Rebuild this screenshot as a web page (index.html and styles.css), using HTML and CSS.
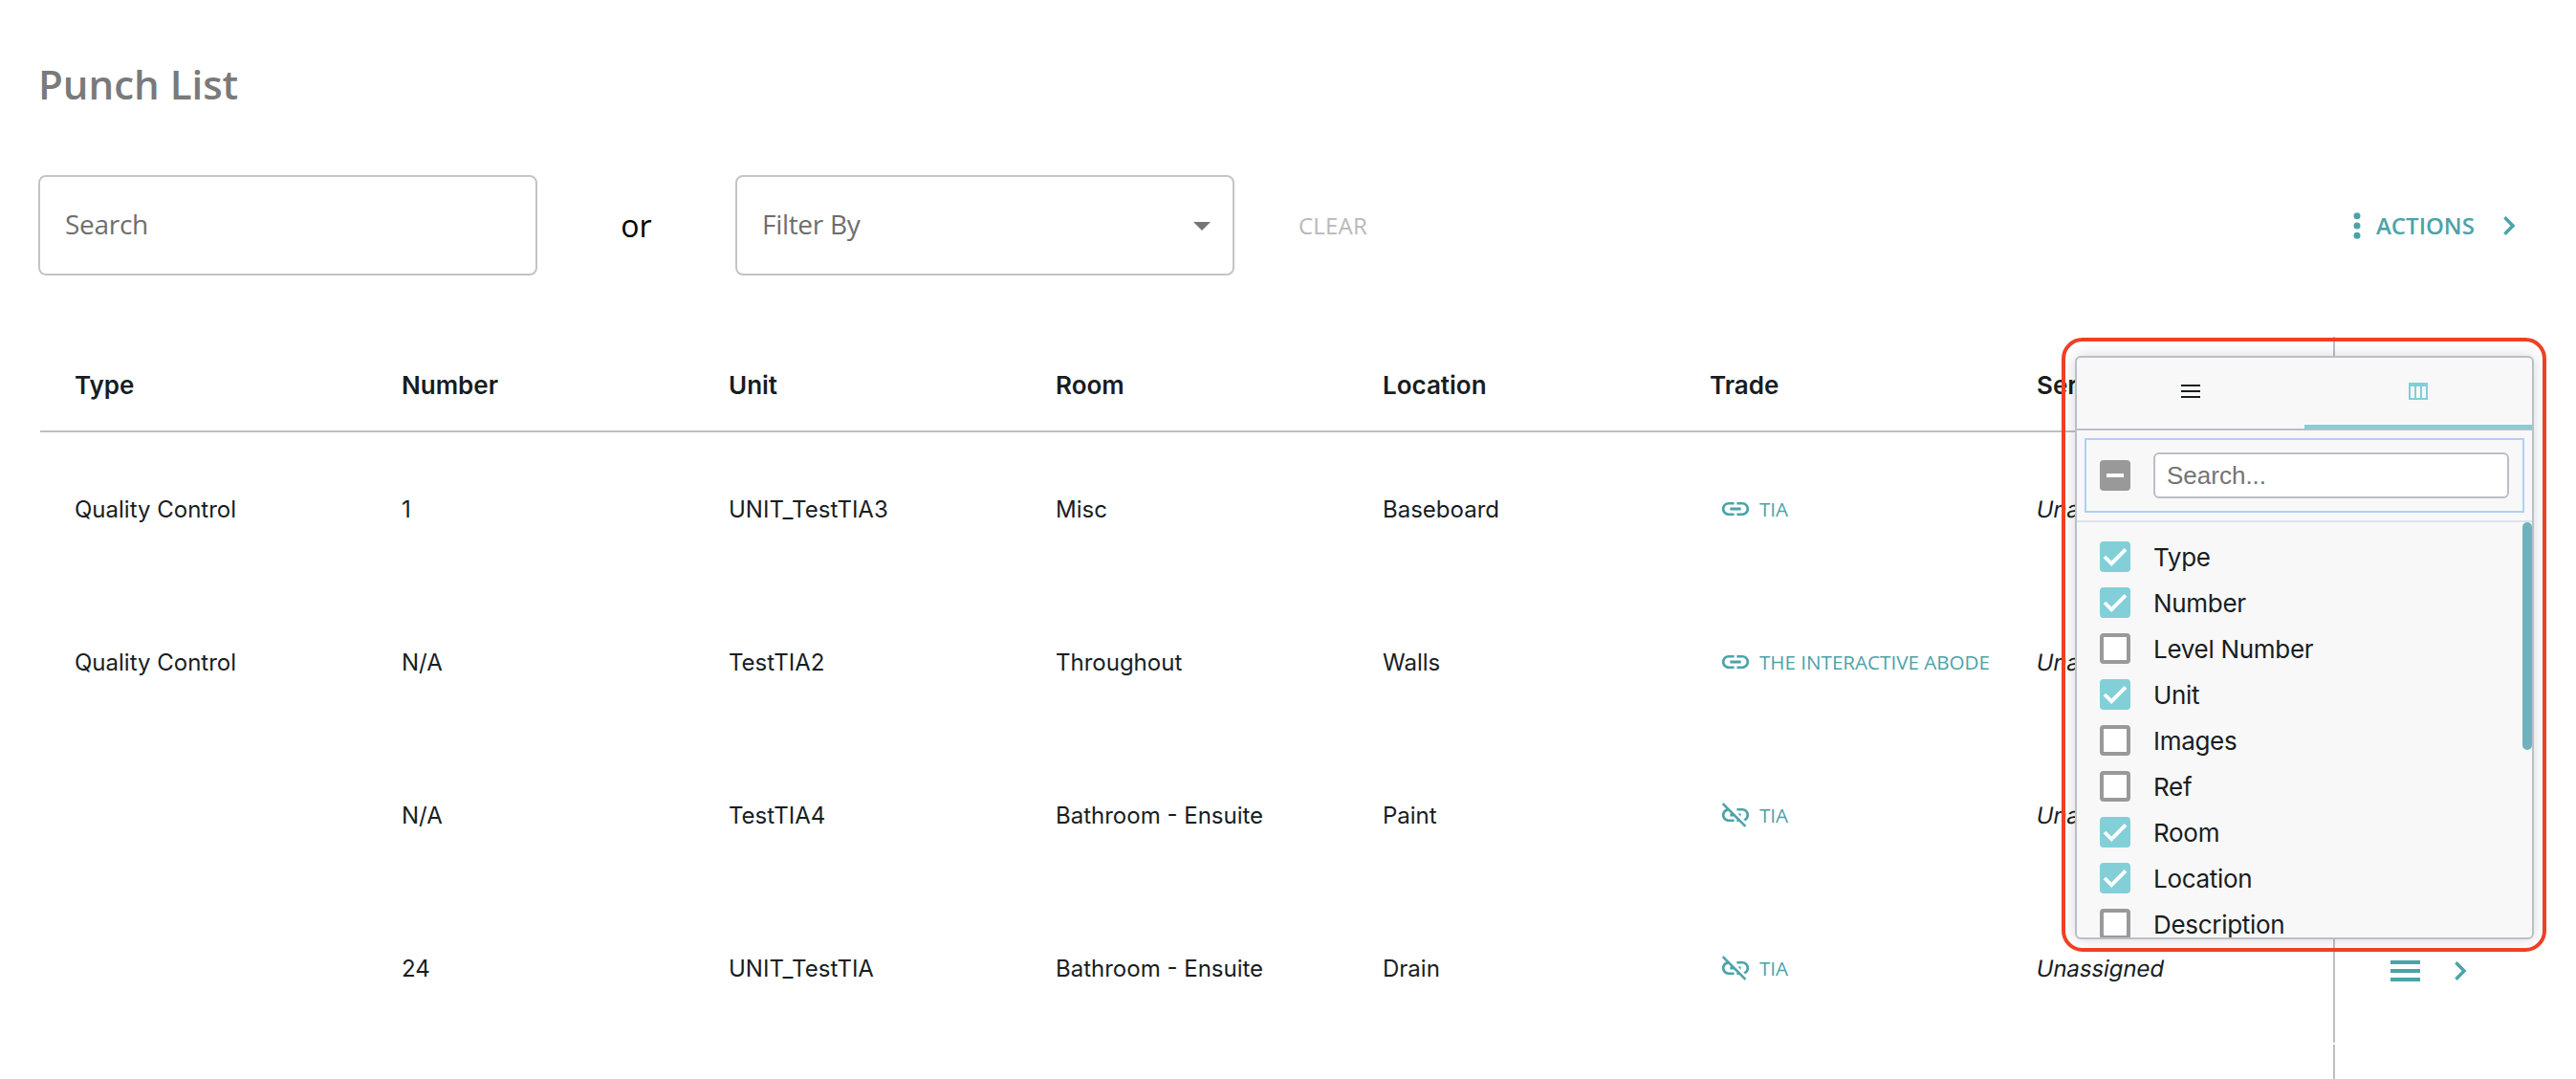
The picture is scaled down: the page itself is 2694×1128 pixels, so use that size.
FILE: index.html
```html
<!DOCTYPE html>
<html lang="en">
<head>
<meta charset="utf-8">
<title>Punch List</title>
<link rel="stylesheet" href="styles.css">
</head>
<body>
<svg class="sprite" aria-hidden="true">
  <symbol id="link" viewBox="0 0 24 24"><path d="M3.9 12c0-1.71 1.39-3.1 3.1-3.1h4V7H7c-2.76 0-5 2.24-5 5s2.24 5 5 5h4v-1.9H7c-1.71 0-3.1-1.39-3.1-3.1zM8 13h8v-2H8v2zm9-6h-4v1.9h4c1.71 0 3.1 1.39 3.1 3.1s-1.39 3.1-3.1 3.1h-4V17h4c2.76 0 5-2.24 5-5s-2.24-5-5-5z"/></symbol>
  <symbol id="unlink" viewBox="0 0 24 24"><path d="M17 7h-4v1.9h4c1.71 0 3.1 1.39 3.1 3.1 0 1.43-.98 2.63-2.31 2.98l1.46 1.46C20.88 15.61 22 13.95 22 12c0-2.76-2.24-5-5-5zm-1 4h-2.19l2 2H16zM2 4.27l3.11 3.11C3.29 8.12 2 9.91 2 12c0 2.76 2.24 5 5 5h4v-1.9H7c-1.71 0-3.1-1.39-3.1-3.1 0-1.59 1.21-2.9 2.76-3.07L8.73 11H8v2h2.73L13 15.27V17h1.73l4.01 4L20 19.74 3.27 3 2 4.27z"/></symbol>
  <symbol id="chevron" viewBox="0 0 12 20"><path d="M1.4 1.2 10 10l-8.6 8.8" fill="none" stroke="currentColor" stroke-width="3.4"/></symbol>
  <symbol id="check" viewBox="0 0 32 32"><path d="M5 16l7.2 7.2L27 8.4" fill="none" stroke="#fff" stroke-width="3.8"/></symbol>
</svg>
<main class="page">
  <h1 class="title">Punch List</h1>
  <div class="toolbar">
    <div class="field">Search</div>
    <span class="or">or</span>
    <div class="field select">Filter By<i class="caret"></i></div>
    <span class="clear">CLEAR</span>
    <div class="actions">
      <svg class="dots" viewBox="0 0 8 28"><circle cx="4" cy="3.7" r="3.5"/><circle cx="4" cy="14" r="3.5"/><circle cx="4" cy="24.3" r="3.5"/></svg>
      <span class="actions-label">ACTIONS</span>
      <svg class="chev"><use href="#chevron"/></svg>
    </div>
  </div>
  <div class="table">
    <div class="row head"><span>Type</span><span>Number</span><span>Unit</span><span>Room</span><span>Location</span><span>Trade</span><span>Service</span><div class="pinned"></div></div>
    <div class="row"><span>Quality Control</span><span>1</span><span>UNIT_TestTIA3</span><span>Misc</span><span>Baseboard</span><a class="trade"><svg><use href="#link"/></svg>TIA</a><span class="unassigned">Unassigned</span><div class="pinned"></div></div>
    <div class="row"><span>Quality Control</span><span>N/A</span><span>TestTIA2</span><span>Throughout</span><span>Walls</span><a class="trade"><svg><use href="#link"/></svg>THE INTERACTIVE ABODE</a><span class="unassigned">Unassigned</span><div class="pinned"></div></div>
    <div class="row"><span></span><span>N/A</span><span>TestTIA4</span><span>Bathroom - Ensuite</span><span>Paint</span><a class="trade"><svg><use href="#unlink"/></svg>TIA</a><span class="unassigned">Unassigned</span><div class="pinned"></div></div>
    <div class="row"><span></span><span>24</span><span>UNIT_TestTIA</span><span>Bathroom - Ensuite</span><span>Drain</span><a class="trade"><svg><use href="#unlink"/></svg>TIA</a><span class="unassigned">Unassigned</span><div class="pinned last"><svg class="menu" viewBox="0 0 31 22"><path d="M0 0h31v4H0zM0 9h31v4H0zM0 18h31v4H0z"/></svg><svg class="chev"><use href="#chevron"/></svg></div></div>
    <div class="row tail"><div class="pinned"></div></div>
  </div>
</main>
<aside class="panel">
  <div class="tabs">
    <div class="tab"><svg class="tab-menu" viewBox="0 0 20 14"><path d="M0 0h20v2H0zM0 6h20v2H0zM0 12h20v2H0z"/></svg></div>
    <div class="tab active"><svg class="tab-cols" viewBox="0 0 20 18"><path fill-rule="evenodd" d="M0 0h20v18H0zM2 4h4v12H2zM8 4h4v12H8zM14 4h4v12h-4z"/></svg></div>
  </div>
  <div class="filter"><div class="filter-box"><i class="box mixed"></i><div class="find">Search...</div></div></div>
  <div class="list">
    <div class="item"><svg class="box on"><use href="#check"/></svg><span>Type</span></div>
    <div class="item"><svg class="box on"><use href="#check"/></svg><span>Number</span></div>
    <div class="item"><i class="box"></i><span>Level Number</span></div>
    <div class="item"><svg class="box on"><use href="#check"/></svg><span>Unit</span></div>
    <div class="item"><i class="box"></i><span>Images</span></div>
    <div class="item"><i class="box"></i><span>Ref</span></div>
    <div class="item"><svg class="box on"><use href="#check"/></svg><span>Room</span></div>
    <div class="item"><svg class="box on"><use href="#check"/></svg><span>Location</span></div>
    <div class="item"><i class="box"></i><span>Description</span></div>
    <i class="thumb"></i>
  </div>
</aside>
<div class="highlight"></div>
</body>
</html>
```
FILE: styles.css
```css
* { box-sizing: border-box; }
body { margin: 0; width: 2694px; height: 1128px; overflow: hidden; position: relative; background: #fff; font-family: "Open Sans", "Noto Sans", sans-serif; }
svg { display: block; fill: currentColor; flex: none; }
.sprite { position: absolute; width: 0; height: 0; }
.page { padding: 0 40px; }
.title { margin: 0; padding-top: 58px; height: 183px; font-size: 42px; line-height: 60px; font-weight: 600; color: #7a7a7a; }
.toolbar { display: flex; align-items: center; height: 105px; }
.field { width: 522px; height: 105px; border: 2px solid #c4c4c4; border-radius: 8px; padding: 0 26px 4px; display: flex; align-items: center; font-size: 28px; letter-spacing: -.3px; color: #6e6e6e; }
.or { width: 207px; text-align: center; font-size: 32px; color: #000; }
.select { justify-content: space-between; padding-right: 23px; }
.caret { border: 9px solid transparent; border-top-color: #757575; border-bottom: 0; margin-top: 5px; }
.clear { margin-left: 67px; font-size: 24px; font-weight: 500; letter-spacing: .2px; color: #b8b8b8; }
.actions { display: flex; align-items: center; margin-left: auto; margin-right: 24px; color: #4ba3a9; font-size: 24px; font-weight: 600; }
.dots { width: 8px; height: 28px; margin-right: 16px; }
.actions-label { width: 133px; }
.chev { width: 12px; height: 20px; }
.table { margin: 64px 0 0 2px; font-family: Inter, sans-serif; font-size: 24px; color: #181d1f; }
.row { display: grid; grid-template-columns: repeat(6, 342px) 346px 208px; height: 160px; align-items: center; width: 2606px; }
.row > span { padding-left: 36px; white-space: nowrap; }
.head { height: 100px; font-size: 26px; font-weight: 600; border-bottom: 2px solid #babfc7; }
.head > span { padding-top: 3px; }
.row > .unassigned { transform: skewX(-10deg); letter-spacing: -.1px; }
.trade { display: flex; align-items: center; gap: 8px; padding-left: 46px; color: #4ba3a9; font-family: "Open Sans", sans-serif; font-size: 20.6px; white-space: nowrap; }
.trade svg { width: 34px; height: 34px; }
.pinned { grid-column: 8; align-self: stretch; border-left: 2px solid #babfc7; display: flex; align-items: center; padding-left: 58px; gap: 36px; color: #4ba3a9; }
.last { margin-bottom: 2px; padding-top: 8px; }
.tail { height: 36px; }
.menu { width: 31px; height: 22px; }
.panel { position: absolute; left: 2170px; top: 372px; width: 480px; height: 610px; display: flex; flex-direction: column; background: #f8f8f8; border: 2px solid #babfc7; border-radius: 6px; box-shadow: 0 0 16px rgba(0, 0, 0, .16); overflow: hidden; font-family: Inter, sans-serif; font-size: 26px; color: #181d1f; }
.tabs { display: flex; height: 76px; border-bottom: 2px solid #babfc7; }
.tab { flex: 1; display: flex; align-items: center; justify-content: center; border-bottom: 4px solid transparent; }
.active { color: #82cfd8; border-bottom-color: #82cfd8; }
.tab-menu { width: 20px; height: 14px; }
.tab-cols { width: 20px; height: 18px; }
.filter { height: 96px; padding: 8px; border-bottom: 2px solid #dde2eb; }
.filter-box { height: 78px; border: 2px solid #b0d0f4; display: flex; align-items: center; padding-left: 14px; gap: 24px; }
.find { width: 372px; height: 48px; border: 2px solid #babfc7; border-radius: 6px; background: #fff; padding-left: 12px; line-height: 44px; font-family: "Liberation Sans", Arial, sans-serif; font-size: 26px; color: #757575; }
.box { width: 32px; height: 32px; border: 4px solid #999; border-radius: 4px; background: #fff; flex: none; display: block; }
.on { border: 0; background: #82cfd8; }
.mixed { background: linear-gradient(#fff, #fff) center / 18px 4px no-repeat #999; }
.list { position: relative; flex: 1; padding-top: 12px; overflow: hidden; }
.item { display: flex; align-items: center; height: 48px; gap: 24px; padding-left: 24px; letter-spacing: -.3px; }
.item span { line-height: 30px; padding-top: 2px; }
.thumb { position: absolute; right: 0; top: 0; width: 10px; height: 238px; border-radius: 5px; background: #6eb3bb; }
.highlight { position: absolute; left: 2156px; top: 353px; width: 507px; height: 642px; border: 4px solid #ef4023; border-radius: 22px; }
```
